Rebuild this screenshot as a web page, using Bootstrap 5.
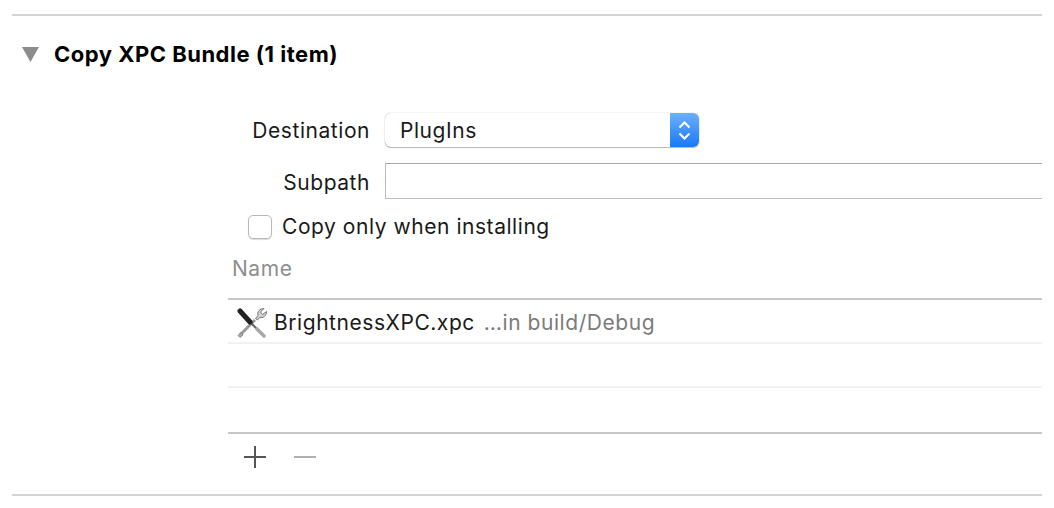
<!DOCTYPE html>
<html lang="en">
<head>
    <meta charset="UTF-8">
    <title>Copy XPC Bundle</title>
    <link href="https://cdn.jsdelivr.net/npm/bootstrap@5.3.0/dist/css/bootstrap.min.css" rel="stylesheet">
    <style>
        html, body { height: 508px; overflow: hidden; }
        body { background: #fff; color: #1a1a1a; font-family: Inter, "Liberation Sans", sans-serif; font-size: 21px; line-height: 26px; letter-spacing: .55px; }
        .phase { margin: 14px 12px 0 12px; height: 482px; border-top: 2px solid #d4d4d4; border-bottom: 2px solid #d4d4d4; }
        .phase-head { height: 76px; padding: 0 0 0 10px; gap: 15px; }
        .phase-title { font-size: 22px; font-weight: 700; color: #000; letter-spacing: .5px; }
        .phase-body { padding-left: 216px; padding-top: 21px; }
        .field-row { gap: 15px; }
        .field-label { width: 142px; text-align: right; padding-top: 1px; }
        .popup { width: 314px; height: 34px; border-radius: 6px; box-shadow: 0 0 1px #999, 0 1px 1px #bbb; overflow: hidden; }
        .popup-text { padding: 1px 0 0 15px; }
        .popup-arrows { width: 29px; background: linear-gradient(#6cb0fd, #1a78f8); }
        .subpath-row { margin-top: 16px; }
        .subpath-row .field-label { padding-top: 3px; }
        .path-box { height: 36px; border: 1px solid #bdbdbd; border-top-color: #a8a8a8; border-right: 0; }
        .install-row { margin-top: 13px; padding-left: 20px; height: 30px; gap: 10px; }
        .check-box { width: 24px; height: 24px; border: 1px solid #b9b9b9; border-radius: 5px; box-shadow: 0 1px 1px #ddd; }
        .files { margin-top: 13px; }
        .files-head { height: 45px; padding: 0 0 16px 4px; border-bottom: 2px solid #c8c8c8; color: #8e8e8e; }
        .file-row { height: 44px; padding-top: 3px; border-bottom: 2px solid #f1f1f1; }
        .file-row-last { border-bottom: 0; }
        .file-name { margin-left: 7px; }
        .file-loc { margin-left: 9px; color: #7b7b7b; }
        .files-foot { height: 48px; padding: 0 0 0 16px; gap: 28px; border-top: 2px solid #c8c8c8; }
        .tool-icon { margin-left: 9px; }
    </style>
</head>
<body>

<section class="phase">
    <div class="phase-head d-flex align-items-center">
        <svg width="17" height="15" viewBox="0 0 17 15"><polygon points="0,0 17,0 8.5,15" fill="#8c8c8c"/></svg>
        <span class="phase-title">Copy XPC Bundle (1 item)</span>
    </div>
    <div class="phase-body">
        <div class="field-row d-flex align-items-center">
            <label class="field-label">Destination</label>
            <div class="popup d-flex">
                <div class="popup-text flex-grow-1 d-flex align-items-center">PlugIns</div>
                <div class="popup-arrows d-flex align-items-center justify-content-center">
                    <svg width="15" height="23" viewBox="0 0 15 23" fill="none" stroke="#fff" stroke-width="2"><path d="M2.5 8.5 7.5 3.5 12.5 8.5M2.5 14.5 7.5 19.5 12.5 14.5"/></svg>
                </div>
            </div>
        </div>
        <div class="field-row subpath-row d-flex align-items-center">
            <label class="field-label">Subpath</label>
            <div class="path-box flex-grow-1"></div>
        </div>
        <div class="install-row d-flex align-items-center">
            <span class="check-box"></span>
            <span>Copy only when installing</span>
        </div>
        <div class="files">
            <div class="files-head d-flex align-items-center">Name</div>
            <div class="file-row d-flex align-items-center">
                <svg class="tool-icon" width="30" height="30" viewBox="0 0 30 30">
                    <path d="M3 27 18 12" stroke="#999" stroke-width="3"/>
                    <path d="M18.500 10.500 21 7.500C20 4 22.500 .5 27 .5L23.500 4 25.500 6.500 29.500 3.500C29.500 8 26 10.500 22.500 9.500L20.500 12Z" fill="#d0d0d0" stroke="#777"/>
                    <path d="M1 27.500 3 29.500 6 27 4 24.500Z" fill="#aaa" stroke="#777" stroke-width=".7"/>
                    <path d="M13 14 21 22" stroke="#666" stroke-width="2"/>
                    <path d="M20 21 27 28" stroke="#a8a8a8" stroke-width="3.500" stroke-linecap="round"/>
                    <path d="M3 3 13 14" stroke="#222" stroke-width="5" stroke-linecap="round"/>
                </svg>
                <span class="file-name">BrightnessXPC.xpc</span>
                <span class="file-loc">…in build/Debug</span>
            </div>
            <div class="file-row"></div>
            <div class="file-row file-row-last"></div>
            <div class="files-foot d-flex align-items-center">
                <svg width="22" height="22" viewBox="0 0 22 22"><path d="M0 11H22M11 0V22" stroke="#555" stroke-width="2"/></svg>
                <svg width="22" height="22" viewBox="0 0 22 22"><path d="M0 11H22" stroke="#b0b0b0" stroke-width="2"/></svg>
            </div>
        </div>
    </div>
</section>

<script src="https://cdn.jsdelivr.net/npm/bootstrap@5.3.0/dist/js/bootstrap.bundle.min.js"></script>
</body>
</html>
